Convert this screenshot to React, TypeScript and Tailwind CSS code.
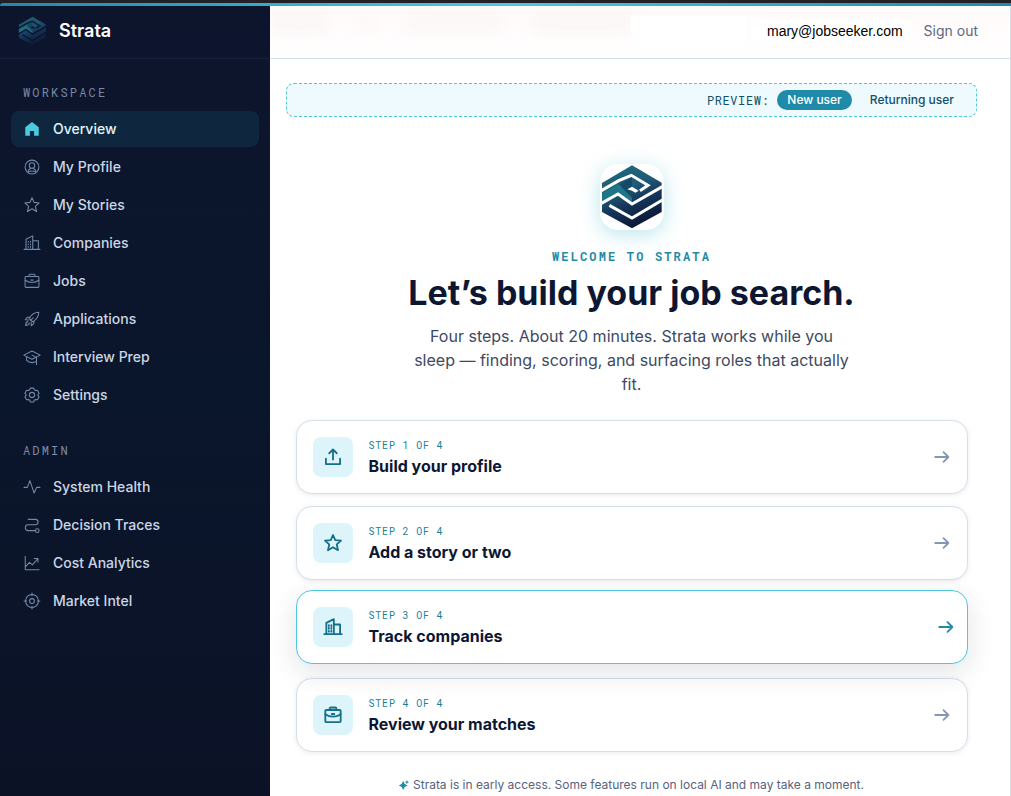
import { ReactNode } from "react";

const icons: { [key: string]: ReactNode } = {
  home: <path d="M12 2.5 3 9.6V21h6.2v-6.2h5.6V21H21V9.6L12 2.5Z" fill="currentColor" stroke="none" />,
  profile: (
    <>
      <circle cx="12" cy="12" r="9.2" />
      <circle cx="12" cy="10" r="3.6" />
      <path d="M7 19.5v-1.2c0-2.2 1.6-4 3.6-4.7M17 19.5v-1.2c0-2.2-1.6-4-3.6-4.7M8.5 17.6h7" />
    </>
  ),
  star: <path d="m12 2.4 2.7 6.1 6.9.7-5.1 4.5 1.5 6.9-6-3.6-6 3.6 1.5-6.9-5.1-4.5 6.9-.7L12 2.4Z" />,
  companies: (
    <>
      <path d="M1.5 20.5h21M4 20.5V7l9-4.5v18M13 9h7.5v11.5" />
      <path d="M7 9.8v1M10 9.8v1M7 13.2v1M10 13.2v1M7 16.6v1M10 16.6v1" />
    </>
  ),
  jobs: (
    <>
      <rect x="2.8" y="6" width="18.4" height="14.5" rx="1.2" />
      <path d="M8 6V4.2c0-.7.5-1.2 1.2-1.2h5.6c.7 0 1.2.5 1.2 1.2V6M2.8 11c2.8 2 5.8 3 9.2 3s6.4-1 9.2-3M10.5 10.8h3" />
    </>
  ),
  rocket: (
    <>
      <path d="M21 3c-5.5 0-9.5 2.6-12.8 8.2l4.6 4.6C18.4 12.5 21 8.5 21 3ZM9.5 9.2 5.8 9.6 3 13l4.7.2M14.8 14.5l-.4 3.7L11 21l-.2-4.7" />
      <path d="M6.5 15.5c-2 .6-3 2.5-3 5 2.5 0 4.4-1 5-3M10 14l3.5-3.5" />
    </>
  ),
  cap: <path d="M12 4 1 9.5 12 15l11-5.5L12 4ZM4.8 11.6v5c2 1.9 4.4 2.9 7.2 2.9 2.4 0 4.3-.7 6-2M12 9.5l6 3V22" />,
  settings: (
    <>
      <circle cx="12" cy="12" r="3.5" />
      <path d="M9.7 2.8h4.6l.8 2.3 1.7 1 2.4-.5 2.3 4-1.6 1.8v1.2l1.6 1.8-2.3 4-2.4-.5-1.7 1-.8 2.3H9.7l-.8-2.3-1.7-1-2.4.5-2.3-4 1.6-1.8v-1.2L2.5 9.6l2.3-4 2.4.5 1.7-1Z" />
    </>
  ),
  health: <path d="M1.5 12.5h4.3L9.2 3.5l5.6 16.5 3.4-7.5h4.3" />,
  traces: (
    <>
      <path d="M7 4.5h9.5a3.6 3.6 0 0 1 0 7.2H7a3.9 3.9 0 0 0 0 7.8h9.5" />
      <circle cx="19" cy="19.5" r="2.4" />
    </>
  ),
  analytics: <path d="M3 3v18h18.5M3 17.5l5.5-6.3 4 3.3 7.3-8.3M15 6h5v5" />,
  target: (
    <>
      <circle cx="12" cy="12" r="8.6" />
      <circle cx="12" cy="12" r="3.2" />
      <path d="M12 1.5v3.5M12 19v3.5M1.5 12H5M19 12h3.5" />
    </>
  ),
  upload: <path d="M3.5 14v6.5h17V14M12 15V3.5M7.5 7.5 12 3l4.5 4.5" />,
  arrow: <path d="M3 12h17.5M14 5.5l6.5 6.5-6.5 6.5" />,
};

function Icon({ name, size, stroke }: { name: string; size: number; stroke: number }) {
  return (
    <svg
      width={size}
      height={size}
      viewBox="0 0 24 24"
      fill="none"
      stroke="currentColor"
      strokeWidth={stroke}
      strokeLinejoin="round"
      strokeLinecap="round"
      className="shrink-0"
      aria-hidden="true"
    >
      {icons[name]}
    </svg>
  );
}

function Logo({ className, gap, id }: { className: string; gap: string; id: string }) {
  return (
    <svg viewBox="6 6 192 198" className={className} aria-hidden="true">
      <defs>
        <linearGradient id={id} x1="0" y1="0" x2="0.4" y2="1">
          <stop offset="0" stopColor="#1d6a7c" />
          <stop offset="0.45" stopColor="#1f5b76" />
          <stop offset="0.7" stopColor="#15345a" />
          <stop offset="1" stopColor="#0d1b3a" />
        </linearGradient>
      </defs>
      <path d="M12 63 102 10l89 52v88l-89 49-90-49Z" fill={`url(#${id})`} />
      <path d="m62 68 40-24v80L62 98Z" fill="#174a66" />
      <path d="M12 92 62 66l40 42v16L60 98l-48 24Z" fill="#1f7688" />
      <path
        d="M10 86 62 56l38-16 50 30-24 16M10 124l50-28 42 30 91-52M34 130l68 38 91-54"
        fill="none"
        stroke={gap}
        strokeWidth="9"
      />
      <path d="m88 82 14-8 20 12-10 6-10-6Z" fill={gap} />
    </svg>
  );
}

const workspaceLinks = [
  { icon: "home", label: "Overview" },
  { icon: "profile", label: "My Profile" },
  { icon: "star", label: "My Stories" },
  { icon: "companies", label: "Companies" },
  { icon: "jobs", label: "Jobs" },
  { icon: "rocket", label: "Applications" },
  { icon: "cap", label: "Interview Prep" },
  { icon: "settings", label: "Settings" },
];

const adminLinks = [
  { icon: "health", label: "System Health" },
  { icon: "traces", label: "Decision Traces" },
  { icon: "analytics", label: "Cost Analytics" },
  { icon: "target", label: "Market Intel" },
];

const steps = [
  { icon: "upload", title: "Build your profile" },
  { icon: "star", title: "Add a story or two" },
  { icon: "companies", title: "Track companies" },
  { icon: "jobs", title: "Review your matches" },
];

function NavGroup({ title, links, active }: { title: string; links: typeof adminLinks; active?: string }) {
  return (
    <section>
      <h2 className="px-3 mb-[11px] font-['Roboto_Mono','Liberation_Mono',monospace] text-xs leading-4 tracking-[0.18em] text-[#7989a6]">
        {title}
      </h2>
      <ul className="space-y-0.5">
        {links.map((link) => (
          <li key={link.label}>
            <a
              href="#"
              className={`flex items-center gap-3 h-9 px-3 rounded-lg text-sm font-medium ${
                link.label === active ? "bg-[#0e263e] text-[#e0f5fa]" : "text-[#cbd7e6]"
              }`}
            >
              <span className={link.label === active ? "text-[#4cc9df]" : "text-[#7488a5]"}>
                <Icon name={link.icon} size={18} stroke={1.4} />
              </span>
              {link.label}
            </a>
          </li>
        ))}
      </ul>
    </section>
  );
}

export default function App() {
  const hovered = 2;

  return (
    <div className="min-h-screen flex flex-col bg-[#232127] font-['Inter',sans-serif]">
      <div className="mt-[3px] h-[3px] rounded-tl bg-linear-to-r from-[#1f8ba8] via-[#4cc9df] to-[#1f8ba8]" />
      <div className="flex-1 flex">
        <aside className="w-[270px] shrink-0 bg-linear-to-b from-[#0d152d] via-[#0a162c] to-[#0c1226]">
          <div className="flex items-center gap-3 h-[53px] pl-[18px] pb-0.5 border-b border-[#18213a]">
            <Logo className="w-[29px] h-[30px] opacity-90" gap="#0d152d" id="logo-small" />
            <span className="text-lg font-semibold text-white">Strata</span>
          </div>
          <nav className="px-[11px] pt-[25px] space-y-[29px]">
            <NavGroup title="WORKSPACE" links={workspaceLinks} active="Overview" />
            <NavGroup title="ADMIN" links={adminLinks} />
          </nav>
        </aside>

        <div className="flex-1 min-w-0 bg-white border-r border-[#dcdde0]">
          <header className="relative overflow-hidden flex items-center justify-end h-[53px] pr-8 pb-0.5 border-b border-[#d5e0eb] bg-linear-to-b from-[#fffafa] to-white">
            <div className="absolute left-0 top-3 w-[360px] h-3 flex gap-8 blur-sm" aria-hidden="true">
              <span className="w-14 bg-[#faf3f3]" />
              <span className="w-4 bg-[#fcf6f6]" />
              <span className="flex-1 bg-[#fbf5f5]" />
              <span className="w-24 bg-[#faf3f3]" />
            </div>
            <span className="relative w-[116px] h-[30px] bg-white" />
            <span className="relative ml-1 pl-4 pr-2 bg-white font-['Liberation_Sans',sans-serif] text-sm leading-[22px] text-black">
              mary@jobseeker.com
            </span>
            <button className="relative ml-[13px] text-sm text-[#5b6984]">Sign out</button>
          </header>

          <main className="pl-4 pr-[33px] pt-6">
            <div className="flex items-center justify-end h-[34px] px-3 rounded-lg border border-dashed border-[#4cc9df] bg-[#eefafd] text-xs text-[#12506a]">
              <span className="mr-2 font-['Roboto_Mono','Liberation_Mono',monospace] tracking-wider">PREVIEW:</span>
              <button className="h-5 px-[10px] rounded-full bg-[#1f8ba8] text-white font-medium">New user</button>
              <button className="ml-2 h-5 px-[10px] rounded-full font-medium">Returning user</button>
            </div>

            <div className="mt-[47px] flex flex-col items-center text-center">
              <div className="w-16 h-[66px] rounded-[18px] overflow-hidden bg-white shadow-[0_4px_20px_rgba(60,185,205,0.36)]">
                <Logo className="w-full h-full" gap="#ffffff" id="logo-large" />
              </div>
              <p className="mt-[18px] font-['Roboto_Mono','Liberation_Mono',monospace] text-xs leading-4 font-bold tracking-[0.18em] text-[#1f8ba8]">
                WELCOME TO STRATA
              </p>
              <h1 className="mt-[9px] text-[34px] leading-10 font-bold text-[#0d1732]">Let’s build your job search.</h1>
              <p className="mt-[11px] max-w-md text-base leading-6 text-[#3d4963]">
                Four steps. About 20 minutes. Strata works while you sleep — finding, scoring, and surfacing roles
                that actually fit.
              </p>
            </div>

            <div className="mt-6 mx-auto max-w-2xl space-y-3">
              {steps.map((step, i) => (
                <a
                  key={step.title}
                  href="#"
                  className={`flex items-center gap-4 p-4 rounded-2xl border bg-white ${
                    i === hovered
                      ? "relative -translate-y-0.5 border-[#4cc9df] shadow-[0_8px_28px_rgba(13,23,50,0.12)]"
                      : "border-[#d5e0eb] shadow-[0_1px_5px_rgba(13,23,50,0.09)]"
                  }`}
                >
                  <span className="flex items-center justify-center w-10 h-10 rounded-lg bg-[#ddf5fa] text-[#156f8b]">
                    <Icon name={step.icon} size={20} stroke={2.2} />
                  </span>
                  <span className="flex-1">
                    <span className="block font-['Roboto_Mono','Liberation_Mono',monospace] text-[10px] leading-[18px] tracking-[0.08em] text-[#1b7d98]">
                      STEP {i + 1} OF 4
                    </span>
                    <span className="block text-base leading-[22px] font-bold text-[#0d1732]">{step.title}</span>
                  </span>
                  <span className={i === hovered ? "translate-x-1 text-[#1f8ba8]" : "text-[#8496b2]"}>
                    <Icon name="arrow" size={18} stroke={2.4} />
                  </span>
                </a>
              ))}
            </div>

            <p className="mt-6 pb-3 flex items-center justify-center gap-1 text-xs leading-[18px] text-[#56637f]">
              <svg width="10" height="10" viewBox="0 0 24 24" fill="#1f8ba8" aria-hidden="true">
                <path d="M10 2l3.6 7.4L21 13l-7.4 3.6L10 24l-3.6-7.4L-1 13l7.4-3.6Z" />
                <path d="M19 0l1.6 3.4L24 5l-3.4 1.6L19 10l-1.6-3.4L14 5l3.4-1.6Z" />
              </svg>
              Strata is in early access. Some features run on local AI and may take a moment.
            </p>
          </main>
        </div>
      </div>
    </div>
  );
}
